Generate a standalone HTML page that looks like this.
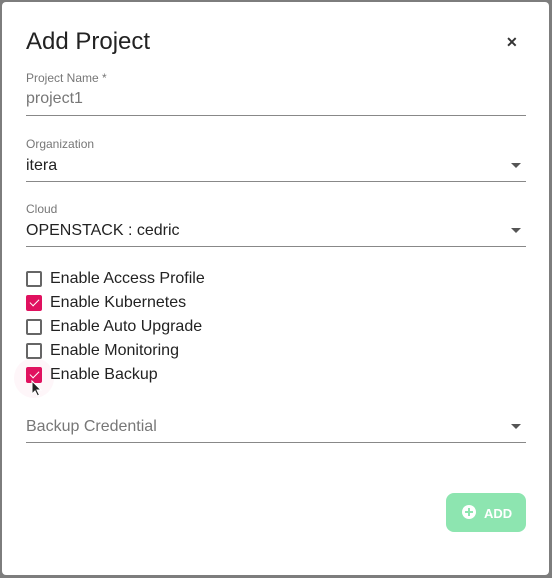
<!DOCTYPE html>
<html><head><style>
*{margin:0;padding:0;box-sizing:border-box}
body{width:552px;height:578px;background:#7d7d7d;font-family:"Liberation Sans",Roboto,sans-serif;position:relative;overflow:hidden}
.dlg{position:absolute;left:2px;top:2px;width:547px;height:573px;background:#fff;border-radius:4px}
.abs{position:absolute}
.title{left:24px;top:26px;font-size:24px;color:#222}
.x{left:504px;top:32px;font-size:14px;font-weight:bold;color:#333}
.lbl{font-size:12px;color:#777}
.val{font-size:16px;color:#222}
.line{height:1px;background:#888;width:500px;left:24px}
.arrow{width:0;height:0;border-left:5px solid transparent;border-right:5px solid transparent;border-top:5px solid #555}
.cb{width:16px;height:16px;border:2px solid #666;border-radius:2px}
.cb.on{background:#e0115f;border-color:#e0115f}
.cb.on::after{content:"";position:absolute;left:4px;top:0px;width:4px;height:8px;border:solid #fff;border-width:0 1.5px 1.5px 0;transform:rotate(45deg)}
.ct{font-size:16px;color:#222}
</style></head><body>
<div class="dlg">
<div class="abs title">Add Project</div>
<div class="abs x">✕</div>
<div class="abs lbl" style="left:24px;top:69px">Project Name *</div>
<div class="abs val" style="left:24px;top:88px;color:#777">project1</div>
<div class="abs line" style="top:113px"></div>
<div class="abs lbl" style="left:24px;top:135px">Organization</div>
<div class="abs val" style="left:24px;top:155px">itera</div>
<div class="abs arrow" style="left:509px;top:161px"></div>
<div class="abs line" style="top:179px"></div>
<div class="abs lbl" style="left:24px;top:200px">Cloud</div>
<div class="abs val" style="left:24px;top:220px">OPENSTACK : cedric</div>
<div class="abs arrow" style="left:509px;top:226px"></div>
<div class="abs line" style="top:244px"></div>
<div class="abs" style="left:12px;top:356px;width:40px;height:40px;border-radius:50%;background:#fef6f9"></div>
<div class="abs cb" style="left:24px;top:269px"></div><div class="abs ct" style="left:48px;top:268px">Enable Access Profile</div>
<div class="abs cb on" style="left:24px;top:293px"></div><div class="abs ct" style="left:48px;top:292px">Enable Kubernetes</div>
<div class="abs cb" style="left:24px;top:317px"></div><div class="abs ct" style="left:48px;top:316px">Enable Auto Upgrade</div>
<div class="abs cb" style="left:24px;top:341px"></div><div class="abs ct" style="left:48px;top:340px">Enable Monitoring</div>
<div class="abs cb on" style="left:24px;top:365px"></div><div class="abs ct" style="left:48px;top:364px">Enable Backup</div>
<svg class="abs" style="left:29px;top:378px" width="12" height="18" viewBox="0 0 12 18"><path d="M1 1 L1 14 L4 11 L6.5 16 L8.5 15 L6 10 L10 10 Z" fill="#222" stroke="#fff" stroke-width="1"/></svg>
<div class="abs val" style="left:24px;top:416px;color:#777">Backup Credential</div>
<div class="abs arrow" style="left:509px;top:422px"></div>
<div class="abs line" style="top:440px"></div>
<div class="abs" style="left:444px;top:491px;width:80px;height:39px;border-radius:8px;background:#8de5b0;color:#fff;font-size:13px;font-weight:bold">
<div class="abs" style="left:16px;top:12px;width:14px;height:14px;border-radius:50%;background:#fff"></div>
<div class="abs" style="left:19px;top:18px;width:8px;height:2px;background:#8de5b0"></div>
<div class="abs" style="left:22px;top:15px;width:2px;height:8px;background:#8de5b0"></div>
<div class="abs" style="left:38px;top:13px">ADD</div>
</div>
</div>
</body></html>
